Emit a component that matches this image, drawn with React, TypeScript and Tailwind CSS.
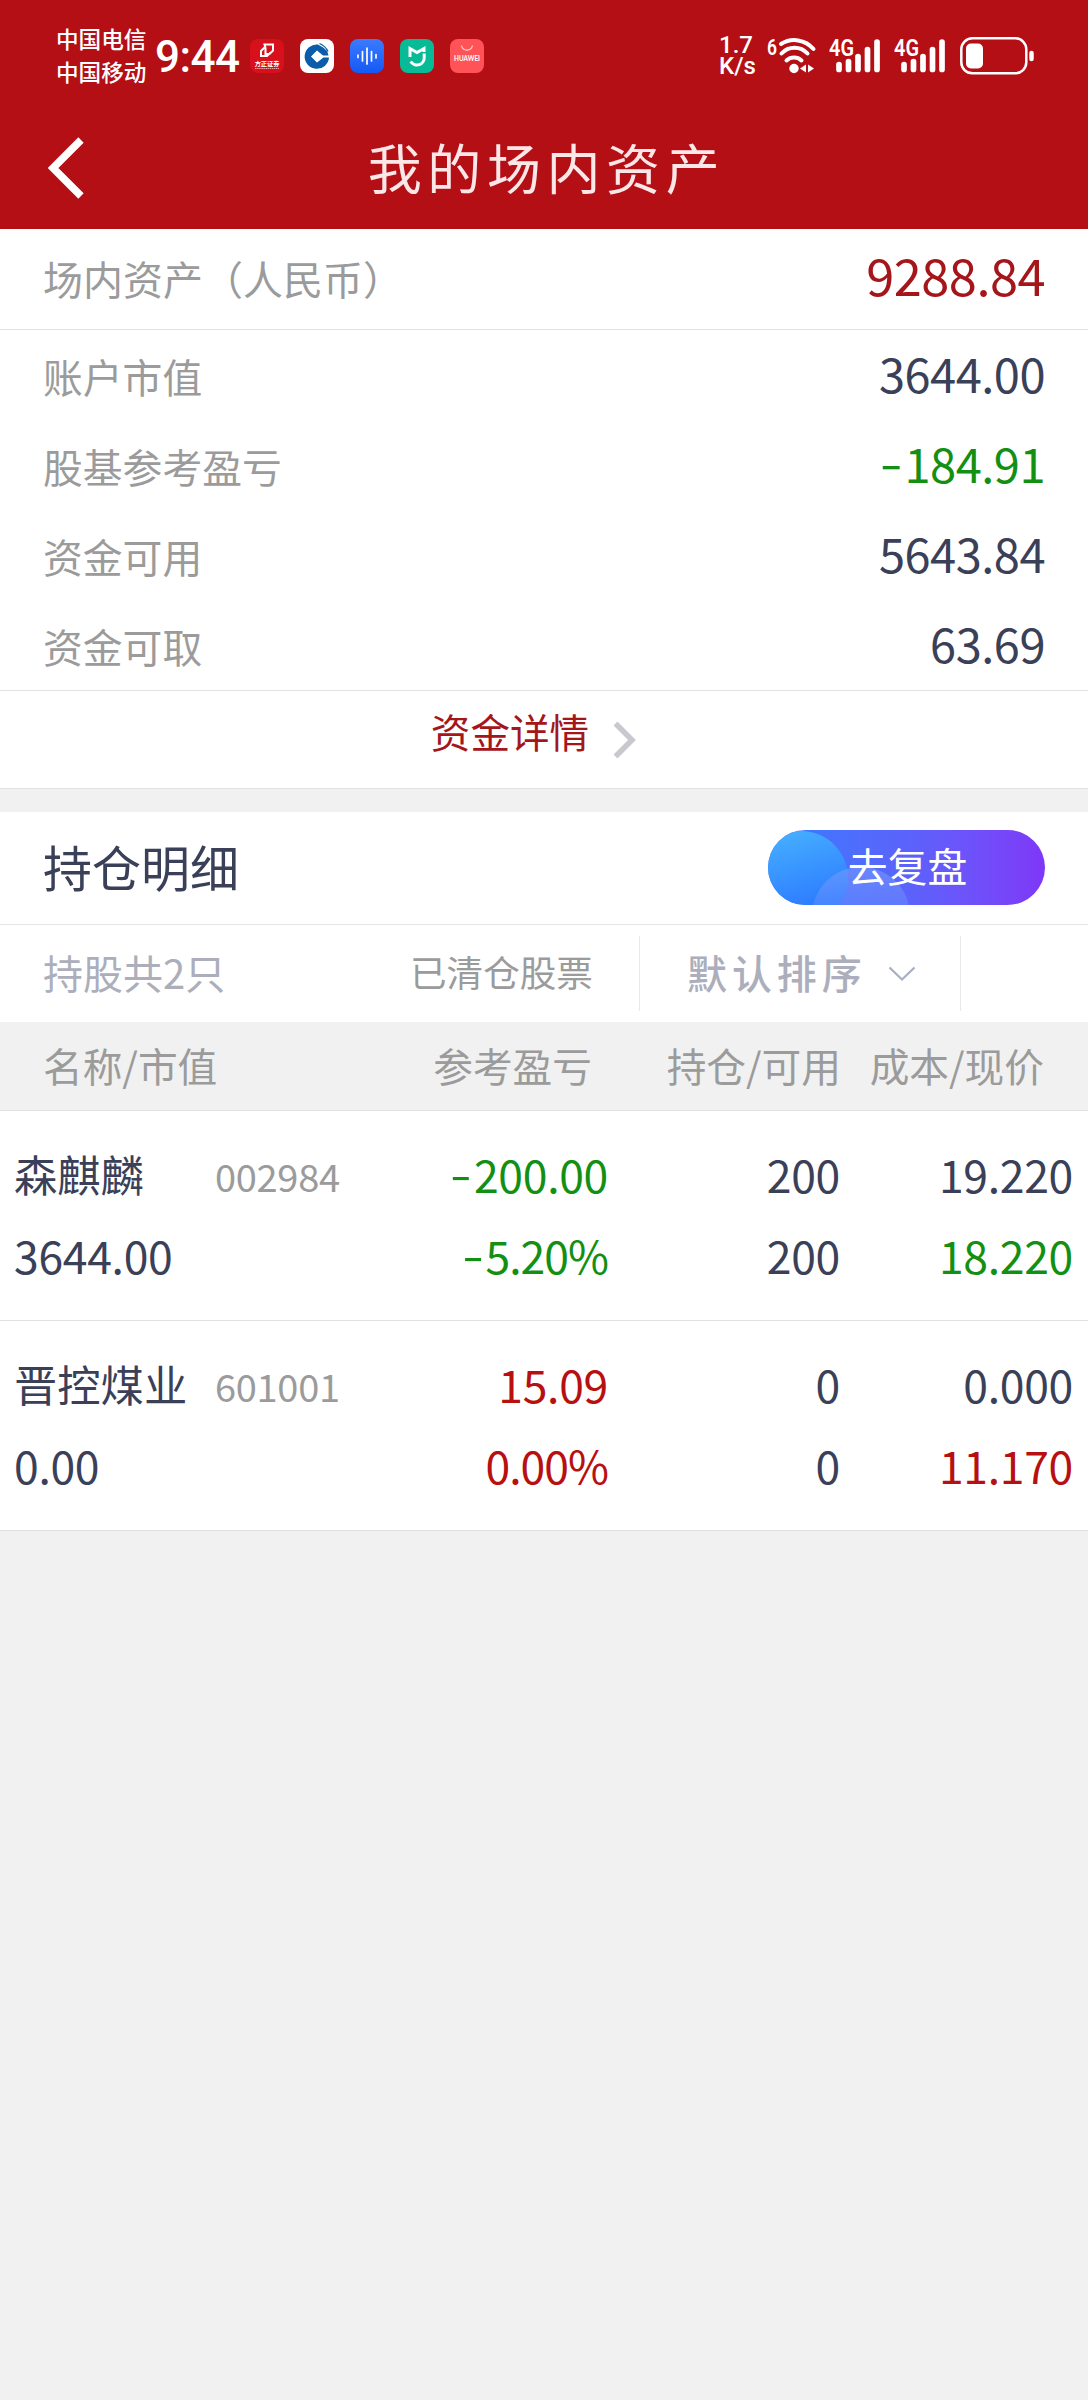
import React from 'react';

interface Holding {
  name: string;
  code: string;
  marketValue: string;
  profit: string;
  profitRate: string;
  position: string;
  available: string;
  cost: string;
  price: string;
  profitColor: string;
  priceColor: string;
}

const summaryRows = [
  { label: '账户市值', value: '3644.00', color: 'text-[#3a4058]' },
  { label: '股基参考盈亏', value: '-184.91', color: 'text-[#139013]' },
  { label: '资金可用', value: '5643.84', color: 'text-[#3a4058]' },
  { label: '资金可取', value: '63.69', color: 'text-[#3a4058]' },
];

const holdings: Holding[] = [
  {
    name: '森麒麟',
    code: '002984',
    marketValue: '3644.00',
    profit: '-200.00',
    profitRate: '-5.20%',
    position: '200',
    available: '200',
    cost: '19.220',
    price: '18.220',
    profitColor: 'text-[#139013]',
    priceColor: 'text-[#139013]',
  },
  {
    name: '晋控煤业',
    code: '601001',
    marketValue: '0.00',
    profit: '15.09',
    profitRate: '0.00%',
    position: '0',
    available: '0',
    cost: '0.000',
    price: '11.170',
    profitColor: 'text-[#b80f10]',
    priceColor: 'text-[#b80f10]',
  },
];

function AppIcons() {
  return (
    <div className="flex gap-4">
      <svg width="34" height="34" viewBox="0 0 34 34">
        <rect width="34" height="34" rx="8" fill="#d8101c" />
        <path d="M14.5 5.5h8.5v6l-3.500 3.500h-4v-6zM14.500 8.500l-3.500 3.500v5h6l3-3" fill="none" stroke="#fff" strokeWidth="2" />
        <text x="17" y="27" textAnchor="middle" fontSize="6.200" fontWeight="700" fill="#fff">方正证券</text>
        <path d="M5 29.500h24" stroke="#f3a5a8" strokeWidth="1" strokeDasharray="1.500 .6" />
      </svg>
      <svg width="34" height="34" viewBox="0 0 34 34">
        <rect width="34" height="34" rx="8" fill="#fff" />
        <path d="M18 5.500a12.200 12.200 0 1 0 11 13h-5.500l-6.500 5-6-6 6-6 6 5h5.500a12 12 0 0 0-1.500-4z" fill="#0b5cab" />
        <path d="M19.500 4.500q6 2.500 8.500 8M17.500 6.500q6.500 2 9.500 7" fill="none" stroke="#0b5cab" strokeWidth="1.300" />
        <path d="M17 12l5.500 5.500-5.500 5.500-5.500-5.500z" fill="#fff" />
      </svg>
      <svg width="34" height="34" viewBox="0 0 34 34">
        <defs>
          <linearGradient id="voice" x1="0" y1="0" x2="0" y2="1">
            <stop stopColor="#3b7bff" />
            <stop offset="1" stopColor="#1459f5" />
          </linearGradient>
        </defs>
        <rect width="34" height="34" rx="8" fill="url(#voice)" />
        <path d="M8 16v2.500M12.500 12.500v9.500M17 9v16M21.500 12.500v9.500M26 15.500v3.500" stroke="#fff" strokeWidth="1.700" strokeLinecap="round" />
      </svg>
      <svg width="34" height="34" viewBox="0 0 34 34">
        <rect width="34" height="34" rx="8" fill="#06bb95" />
        <path d="M10 18V9.500l7 4 7-4V13" fill="none" stroke="#fff" strokeWidth="3" />
        <path d="M24.200 14.500v3.500a7.300 7.300 0 0 1-13.500 4.500" fill="none" stroke="#fff" strokeWidth="3" />
      </svg>
      <svg width="34" height="34" viewBox="0 0 34 34">
        <rect width="34" height="34" rx="8" fill="#ff5357" />
        <path d="M11.500 6.500a5.600 5.600 0 0 0 11 0" fill="none" stroke="#ffd5d5" strokeWidth="1.200" />
        <text x="17" y="22" textAnchor="middle" textLength="26" lengthAdjust="spacingAndGlyphs" fontFamily="Lato, sans-serif" fontSize="6.500" fontWeight="700" fill="#fff">HUAWEI</text>
      </svg>
    </div>
  );
}

function Wifi() {
  return (
    <svg width="50" height="40" viewBox="0 0 50 40">
      <text x="0" y="18.500" fontFamily="Roboto, sans-serif" fontSize="22" fontWeight="600" textLength="10" lengthAdjust="spacingAndGlyphs" fill="#fff">6</text>
      <g fill="none" stroke="#fff" strokeWidth="4" strokeLinecap="round">
        <path d="M14 8a25 25 0 0 1 32.500 5" />
        <path d="M14.500 17.500a17.500 17.500 0 0 1 26 0" />
        <path d="M19.500 24.500a11 11 0 0 1 15 0" />
      </g>
      <circle cx="27" cy="32.500" r="4.700" fill="#fff" />
      <path d="M39 28.500v8l-6-4zM41 28.500v8l6-4z" fill="#fff" />
    </svg>
  );
}

function Signal() {
  return (
    <svg width="52" height="40" viewBox="0 0 52 40">
      <text x="0" y="19.500" fontFamily="Roboto, sans-serif" fontSize="23" fontWeight="600" textLength="25" lengthAdjust="spacingAndGlyphs" fill="#fff">4G</text>
      <path d="M10 28.500v5M19.500 25.500v8M29 20.500v13M38.500 13.500v20M48 6v27.500" stroke="#fff" strokeWidth="5.700" strokeLinecap="round" />
    </svg>
  );
}

function Battery() {
  return (
    <svg width="76" height="40" viewBox="0 0 76 40">
      <rect x="1.300" y="2.300" width="65" height="35" rx="11" fill="none" stroke="#fff" strokeWidth="2.500" />
      <rect x="6" y="7.500" width="17" height="25" rx="5" fill="#fff" />
      <path d="M71.500 17v6" stroke="#fff" strokeWidth="4.500" strokeLinecap="round" />
    </svg>
  );
}

function StatusBar() {
  return (
    <div className="flex h-[110px] items-center pl-14 pr-[52px] pt-0.5 text-white">
      <div className="w-[99px] pb-[3px] text-[22.6px] font-medium leading-[33px]">
        <div>中国电信</div>
        <div>中国移动</div>
      </div>
      <div className="w-[95px] pt-0.5 font-[Roboto] text-[44px] font-medium leading-none tracking-[-0.5px]">9:44</div>
      <AppIcons />
      <div className="ml-auto flex items-center">
        <div className="mr-3.5 w-[34px] text-center font-[Roboto] text-[24px] font-medium leading-[21px]">
          <div>1.7</div>
          <div>K/s</div>
        </div>
        <Wifi />
        <div className="ml-3 mr-[13px]">
          <Signal />
        </div>
        <Signal />
        <div className="ml-3.5">
          <Battery />
        </div>
      </div>
    </div>
  );
}

// The minus sign is drawn wider and a little higher than the font's hyphen
function Amount({ value }: { value: string }) {
  if (!value.startsWith('-')) return <>{value}</>;
  return (
    <>
      <span className="mr-[3px] inline-block origin-right -translate-y-[2px] scale-x-140">-</span>
      {value.slice(1)}
    </>
  );
}

function HoldingRow({ item }: { item: Holding }) {
  return (
    <div className="grid h-[210px] grid-cols-[200px_394px_232px_233px] grid-rows-[81px_81px] border-b border-[#e2e2e2] bg-white pl-3.5 pt-[22px] text-[44.5px] leading-[81px] tracking-[-0.3px] text-[#3a4058]">
      <div className="whitespace-nowrap text-[43.3px] tracking-normal">{item.name}</div>
      <div className="flex justify-between">
        <span className="pl-px pt-0.5 text-[38px] text-[#9b9b9b]">{item.code}</span>
        <span className={item.profitColor}><Amount value={item.profit} /></span>
      </div>
      <div className="text-right">{item.position}</div>
      <div className="text-right">{item.cost}</div>
      <div>{item.marketValue}</div>
      <div className={`text-right tracking-[-1px] ${item.profitColor}`}><Amount value={item.profitRate} /></div>
      <div className="text-right">{item.available}</div>
      <div className={`text-right ${item.priceColor}`}>{item.price}</div>
    </div>
  );
}

export default function App() {
  return (
    <div className="min-h-[2400px] w-[1088px] bg-[#f1f1f1] font-['Noto_Sans_CJK_SC',sans-serif] leading-none">
      <header className="h-[229px] bg-[#b40f15]">
        <StatusBar />
        <div className="grid h-[115px] grid-cols-[200px_1fr_200px] items-center">
          <svg className="ml-[47px]" width="40" height="62" viewBox="0 0 40 62">
            <path d="M34 3L6 31l28 28" fill="none" stroke="#fff" strokeWidth="7.500" />
          </svg>
          <h1 className="pb-0.5 pl-[5px] text-center text-[54px] tracking-[5.6px] text-[#fbe6e8]">我的场内资产</h1>
        </div>
      </header>

      <section className="border-b border-[#e2e2e2] bg-white">
        <div className="flex h-[101px] items-center justify-between border-b border-[#e2e2e2] px-[43px]">
          <span className="pb-0.5 text-[40px] text-[#9b9b9b]">场内资产（人民币）</span>
          <span className="pb-2.5 text-[50.5px] tracking-[-0.5px] text-[#a5161b]">9288.84</span>
        </div>
        <div className="border-b border-[#e2e2e2]">
          {summaryRows.map(row => (
            <div key={row.label} className="flex h-[90px] items-center justify-between px-[43px]">
              <span className="pt-0.5 text-[39.8px] text-[#9b9b9b]">{row.label}</span>
              <span className={`pb-[5px] text-[47px] tracking-[-0.5px] ${row.color}`}><Amount value={row.value} /></span>
            </div>
          ))}
        </div>
        <div className="flex h-[97px] items-center justify-center pb-2 pr-5">
          <span className="pb-2.5 text-[39.6px] text-[#a5161b]">资金详情</span>
          <svg className="ml-6 mt-2" width="24" height="38" viewBox="0 0 24 38">
            <path d="M2.500 2.500L19 19 2.500 35.500" fill="none" stroke="#c8c8ce" strokeWidth="5.500" />
          </svg>
        </div>
      </section>

      <section className="mt-[23px] bg-white">
        <div className="flex h-[113px] items-center justify-between border-b border-[#e6e6e6] px-[43px]">
          <h2 className="pb-1.5 text-[49px] text-[#3a4058]">持仓明细</h2>
          <button className="relative mb-px h-[75px] w-[277px] overflow-hidden rounded-full bg-linear-to-r from-[#2f7dff] via-[#5a63fb] to-[#7e37f8]">
            <svg className="absolute inset-0" width="277" height="75" viewBox="0 0 277 75">
              <defs>
                <linearGradient id="bubble" x1="0" y1="0" x2="0.300" y2="1">
                  <stop stopColor="#49b4ff" />
                  <stop offset="1" stopColor="#2a76ff" />
                </linearGradient>
                <linearGradient id="arc" x1="0" y1="0" x2="0" y2="1">
                  <stop stopColor="#7f9dff" stopOpacity="0.550" />
                  <stop offset="1" stopColor="#4f82ff" stopOpacity="0.200" />
                </linearGradient>
              </defs>
              <circle cx="33" cy="48" r="47" fill="url(#bubble)" />
              <circle cx="93" cy="86" r="49" fill="url(#arc)" />
            </svg>
            <span className="relative block pb-1.5 pl-0.5 text-[39.8px] text-white">去复盘</span>
          </button>
        </div>
        <div className="flex h-[97px] items-center text-[40px]">
          <span className="w-[366px] pb-[3px] pl-[43px] text-[#acaebb]">持股共2只</span>
          <span className="w-[273px] pb-0.5 pl-11 text-[36.6px] text-[#9b9b9b]">已清仓股票</span>
          <div className="flex h-[75px] w-[322px] items-center border-x border-[#e6e8eb] pl-[47px]">
            <span className="pb-[3px] font-medium tracking-[4.900px] text-[#acaebb]">默认排序</span>
            <svg className="ml-[21px]" width="28" height="16" viewBox="0 0 28 16">
              <path d="M1.500 1.500L14 13.500 26.500 1.500" fill="none" stroke="#a7b1c2" strokeWidth="2.300" />
            </svg>
          </div>
        </div>
        <div className="grid h-[89px] grid-cols-[350px_199px_249px_203px] items-center border-b border-[#e2e2e2] bg-[#f1f1f1] pb-[3px] pl-[43px] text-[39.7px] text-[#9b9b9b]">
          <span>名称/市值</span>
          <span className="text-right">参考盈亏</span>
          <span className="text-right">持仓/可用</span>
          <span className="text-right">成本/现价</span>
        </div>
        {holdings.map(item => (
          <HoldingRow key={item.code} item={item} />
        ))}
      </section>
    </div>
  );
}
